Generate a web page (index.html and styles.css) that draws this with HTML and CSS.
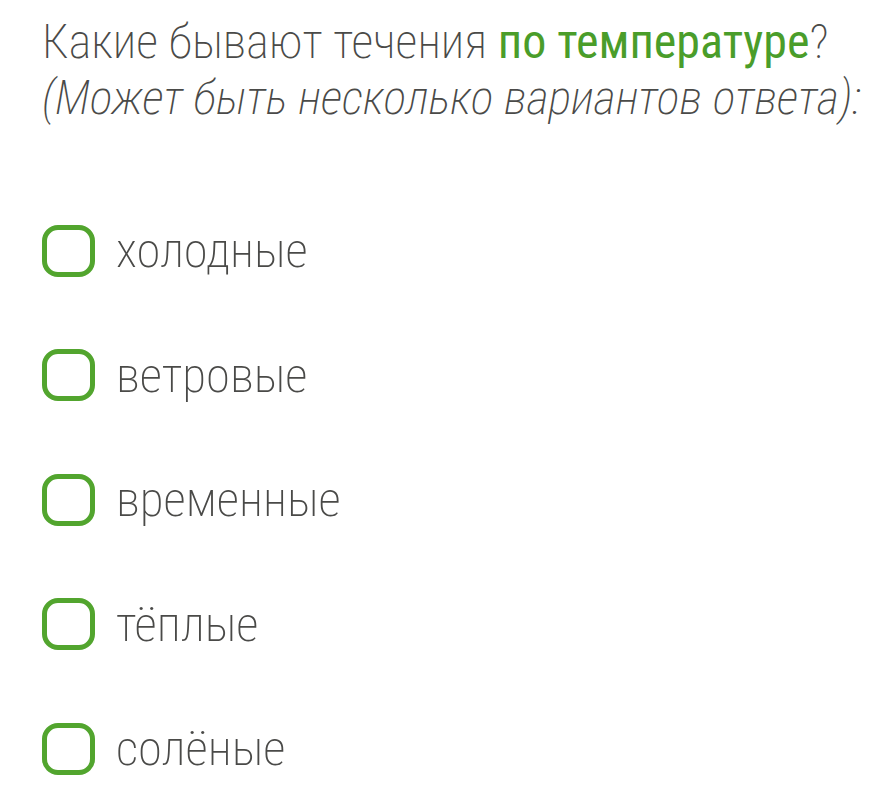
FILE: index.html
```html
<!DOCTYPE html>
<html lang="ru">
<head>
<meta charset="utf-8">
<link rel="stylesheet" href="styles.css">
</head>
<body>
<div class="quiz">
  <div class="question">
    <p class="q-main">Какие бывают течения <span class="hl">по температуре</span>?</p>
    <p class="q-note">(Может быть несколько вариантов ответа):</p>
  </div>
  <ul class="options">
    <li class="option"><span class="box"></span><span class="label">холодные</span></li>
    <li class="option"><span class="box"></span><span class="label">ветровые</span></li>
    <li class="option"><span class="box"></span><span class="label">временные</span></li>
    <li class="option"><span class="box"></span><span class="label">тёплые</span></li>
    <li class="option"><span class="box"></span><span class="label">солёные</span></li>
  </ul>
</div>
</body>
</html>
```

FILE: styles.css
```css
html, body {
  margin: 0;
  padding: 0;
  background: #ffffff;
}
body {
  font-family: "Roboto Condensed", "Roboto", "Liberation Sans", sans-serif;
  font-weight: 250;
  color: #4a4a48;
}
.quiz {
  padding: 14px 0 0 42px;
}
.question p {
  margin: 0;
  font-size: 48px;
  line-height: 56px;
}
.q-note {
  font-style: italic;
}
.hl {
  font-family: "Roboto Condensed", "Roboto", sans-serif;
  color: #4a9d2a;
  font-weight: 400;
}
.options {
  list-style: none;
  margin: 0;
  padding: 0;
  margin-top: 98px;
  display: flex;
  flex-direction: column;
  gap: 71.5px;
}
.option {
  display: flex;
  align-items: center;
  height: 53px;
}
.box {
  box-sizing: border-box;
  width: 53px;
  height: 52px;
  border: 5px solid #52a52e;
  border-radius: 16px;
  flex: none;
}
.label {
  margin-left: 21px;
  font-size: 49px;
  line-height: 53px;
}
```
